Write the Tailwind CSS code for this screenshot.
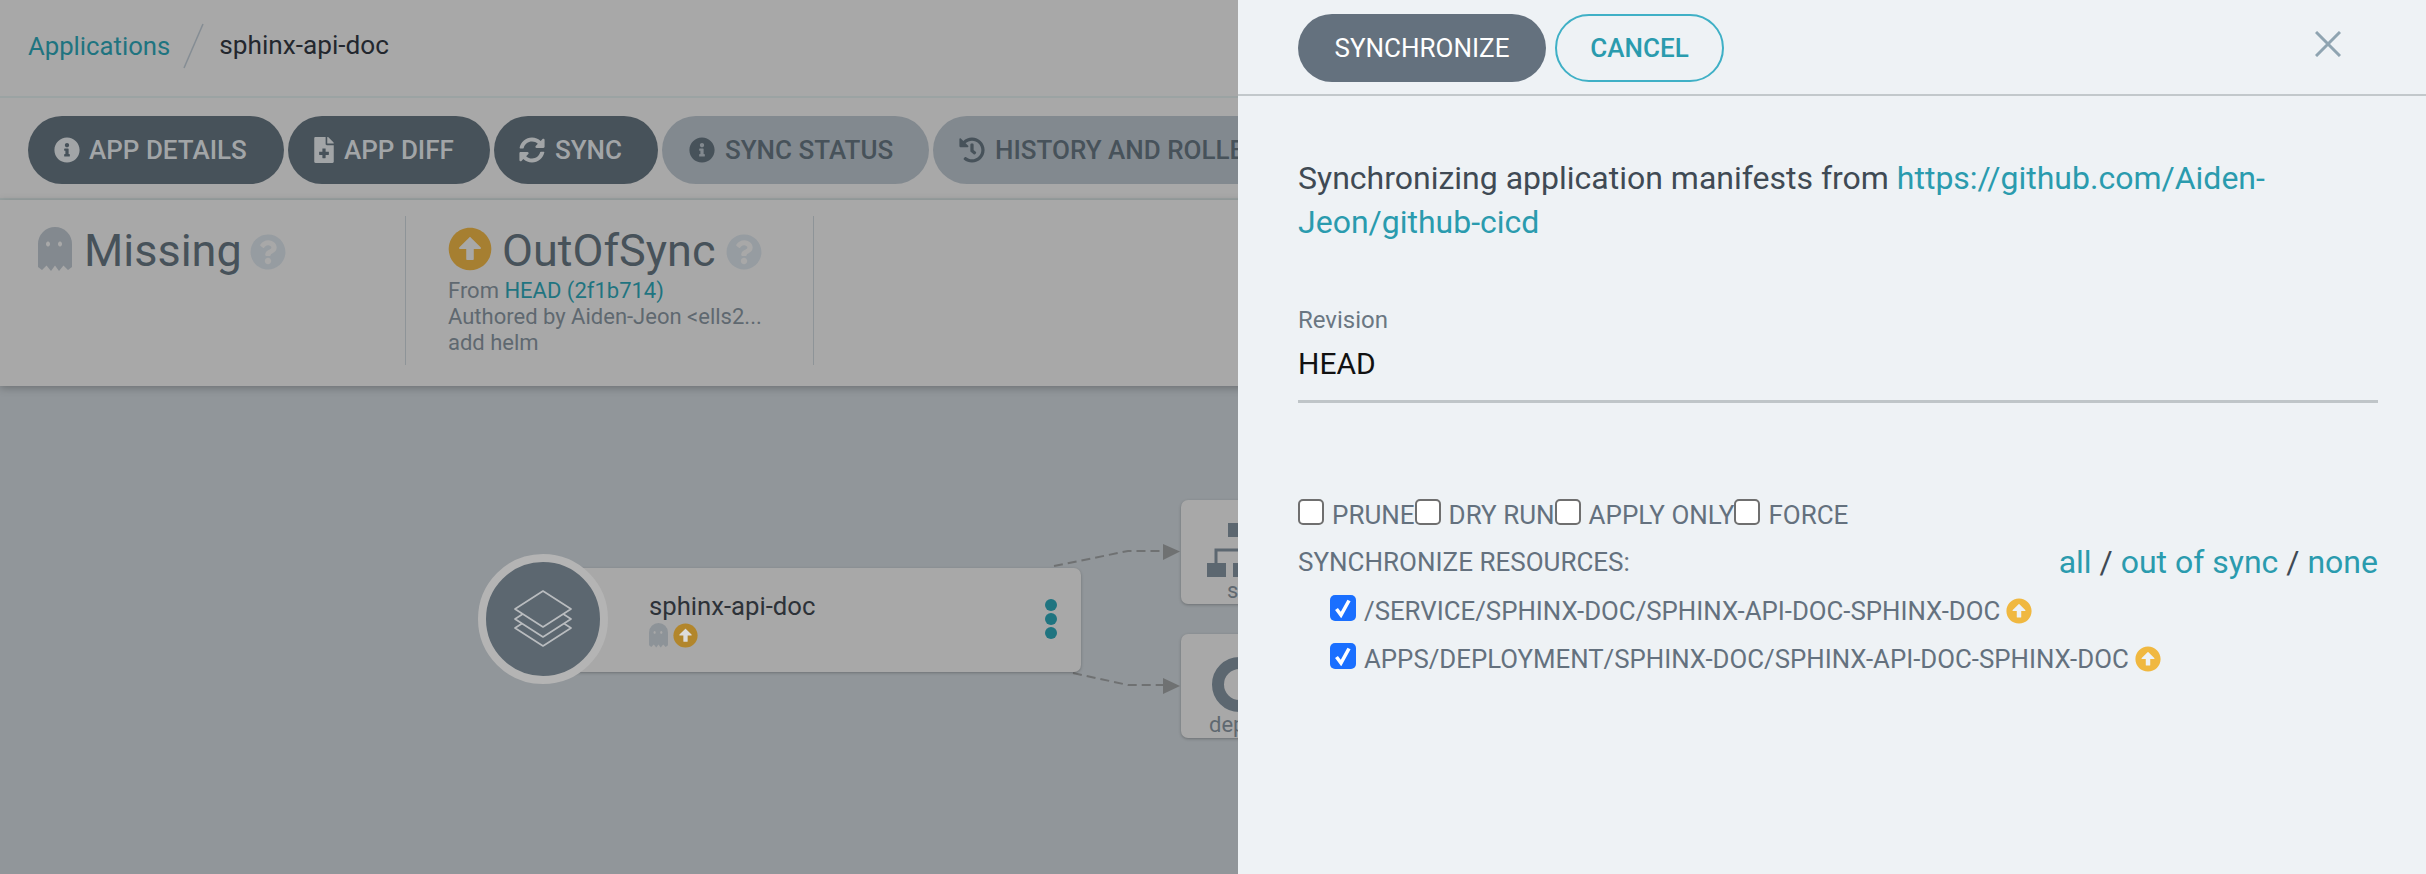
<!DOCTYPE html>
<html lang="en">
<head>
<meta charset="UTF-8">
<title>sphinx-api-doc</title>
<script src="https://cdn.jsdelivr.net/npm/@tailwindcss/browser@4"></script>
</head>
<body class="bg-[#a8a8a8] font-['Roboto',sans-serif]">
<div class="relative w-[2426px] h-[874px] overflow-hidden flex flex-col bg-[#91969a]">

  <!-- top bar -->
  <div class="h-[98px] shrink-0 flex items-center pl-[28px] pb-[4px] bg-[#a8a8a8] border-b-2 border-[#9ba3a3] text-[26px]">
    <a class="text-[#1f7480] text-[25.7px]">Applications</a>
    <svg class="w-[24px] h-[48px] ml-[12px] mr-[13px]" viewBox="0 0 24 48"><path d="M21 2 L2 46" stroke="#858d94" stroke-width="1.5" fill="none"/></svg>
    <span class="text-[#23272e] text-[26.2px]">sphinx-api-doc</span>
  </div>

  <!-- toolbar -->
  <div class="h-[102px] shrink-0 flex items-start pt-[18px] gap-[4px] pl-[28px] bg-[#a8a8a8] border-b-2 border-[#9ba3a3] text-[26px] font-medium whitespace-nowrap">
    <div class="h-[68px] w-[256px] rounded-[34px] bg-[#47525a] text-[#a2a5a7] flex items-center pl-[26px] gap-[9px] shrink-0">
      <svg class="w-[26px] h-[26px] fill-current" viewBox="0 0 512 512"><path d="M256 8C119.043 8 8 119.083 8 256c0 136.997 111.043 248 248 248s248-111.003 248-248C504 119.083 392.957 8 256 8zm0 110c23.196 0 42 18.804 42 42s-18.804 42-42 42-42-18.804-42-42 18.804-42 42-42zm56 254c0 6.627-5.373 12-12 12h-88c-6.627 0-12-5.373-12-12v-24c0-6.627 5.373-12 12-12h12v-64h-12c-6.627 0-12-5.373-12-12v-24c0-6.627 5.373-12 12-12h64c6.627 0 12 5.373 12 12v100h12c6.627 0 12 5.373 12 12v24z"/></svg>
      APP DETAILS
    </div>
    <div class="h-[68px] w-[202px] rounded-[34px] bg-[#47525a] text-[#a2a5a7] flex items-center pl-[26px] gap-[10px] shrink-0">
      <svg class="w-[20px] h-[26px] fill-current" viewBox="0 0 384 512"><path d="M377 105L279.1 7c-4.5-4.5-10.6-7-17-7H256v128h128v-6.1c0-6.3-2.5-12.4-7-16.9zm-153 31V0H24C10.7 0 0 10.7 0 24v464c0 13.3 10.7 24 24 24h336c13.3 0 24-10.7 24-24V160H248c-13.2 0-24-10.8-24-24zm64 160v48c0 4.4-3.6 8-8 8h-56v56c0 4.4-3.6 8-8 8h-48c-4.4 0-8-3.6-8-8v-56h-56c-4.4 0-8-3.6-8-8v-48c0-4.4 3.6-8 8-8h56v-56c0-4.4 3.6-8 8-8h48c4.4 0 8 3.6 8 8v56h56c4.4 0 8 3.6 8 8z"/></svg>
      APP DIFF
    </div>
    <div class="h-[68px] w-[164px] rounded-[34px] bg-[#47525a] text-[#a2a5a7] flex items-center pl-[25px] gap-[10px] shrink-0">
      <svg class="w-[26px] h-[26px] fill-current" viewBox="0 0 512 512"><path d="M370.72 133.28C339.458 104.008 298.888 87.962 255.848 88c-77.458.068-144.328 53.178-162.791 126.85-1.344 5.363-6.122 9.15-11.651 9.15H24.103c-7.498 0-13.194-6.807-11.807-14.176C33.933 94.924 134.813 8 256 8c66.448 0 126.791 26.136 171.315 68.685L463.03 40.97C478.149 25.851 504 36.559 504 57.941V192c0 13.255-10.745 24-24 24H345.941c-21.382 0-32.09-25.851-16.971-40.971l41.75-41.749zM32 296h134.059c21.382 0 32.09 25.851 16.971 40.971l-41.75 41.75c31.262 29.273 71.835 45.319 114.876 45.28 77.418-.07 144.315-53.144 162.787-126.849 1.344-5.363 6.122-9.15 11.651-9.15h57.304c7.498 0 13.194 6.807 11.807 14.176C478.067 417.076 377.187 504 256 504c-66.448 0-126.791-26.136-171.315-68.685L48.97 471.03C33.851 486.149 8 475.441 8 454.059V320c0-13.255 10.745-24 24-24z"/></svg>
      SYNC
    </div>
    <div class="h-[68px] w-[267px] rounded-[34px] bg-[#82898f] text-[#47525a] flex items-center pl-[27px] gap-[10px] shrink-0">
      <svg class="w-[26px] h-[26px] fill-current" viewBox="0 0 512 512"><path d="M256 8C119.043 8 8 119.083 8 256c0 136.997 111.043 248 248 248s248-111.003 248-248C504 119.083 392.957 8 256 8zm0 110c23.196 0 42 18.804 42 42s-18.804 42-42 42-42-18.804-42-42 18.804-42 42-42zm56 254c0 6.627-5.373 12-12 12h-88c-6.627 0-12-5.373-12-12v-24c0-6.627 5.373-12 12-12h12v-64h-12c-6.627 0-12-5.373-12-12v-24c0-6.627 5.373-12 12-12h64c6.627 0 12 5.373 12 12v100h12c6.627 0 12 5.373 12 12v24z"/></svg>
      SYNC STATUS
    </div>
    <div class="h-[68px] w-[480px] rounded-[34px] bg-[#82898f] text-[#47525a] flex items-center pl-[26px] gap-[10px] shrink-0">
      <svg class="w-[26px] h-[26px] fill-current shrink-0" viewBox="0 0 512 512"><path d="M504 255.531c.253 136.64-111.18 248.372-247.82 248.468-59.015.042-113.223-20.53-155.822-54.911-11.077-8.94-11.905-25.541-1.839-35.607l11.267-11.267c8.609-8.609 22.353-9.551 31.891-1.984C173.062 425.135 212.781 440 256 440c101.705 0 184-82.311 184-184 0-101.705-82.311-184-184-184-48.814 0-93.149 18.969-126.068 49.932l50.754 50.754c10.08 10.08 2.941 27.314-11.313 27.314H24c-8.837 0-16-7.163-16-16V38.627c0-14.254 17.234-21.393 27.314-11.314l49.372 49.372C129.209 34.136 189.552 8 256 8c136.81 0 247.747 110.78 248 247.531zm-180.912 78.784l9.823-12.63c8.138-10.463 6.253-25.542-4.21-33.679L288 256.349V152c0-13.255-10.745-24-24-24h-16c-13.255 0-24 10.745-24 24v135.651l65.409 50.874c10.463 8.137 25.541 6.253 33.679-4.21z"/></svg>
      HISTORY AND ROLLBACK
    </div>
  </div>

  <!-- status panel -->
  <div class="h-[186px] shrink-0 flex bg-[#a8a8a8] shadow-[0_2px_8px_rgba(0,0,0,0.25)] z-10 pt-[16px]">
    <div class="w-[406px] h-[149px] border-r border-[#8e9498] pl-[38px] pt-[13px] flex items-start shrink-0">
      <svg class="w-[34px] h-[45px] fill-[#83898f] mt-[-2px] mr-[12px]" viewBox="0 0 34 45" fill-rule="evenodd"><path d="M0 17 A17 17 0 0 1 34 17 V40 L30 43 L25.5 38.5 L21 44 L17 38.5 L13 44 L8.5 38.5 L4 43 L0 40 Z M10 14.5 a2 2.5 0 1 0 .01 0 Z M22 14.5 a2 2.5 0 1 0 .01 0 Z"/></svg>
      <span class="text-[45px] leading-[44px] text-[#47525a] mr-[8px]">Missing</span>
      <svg class="w-[36px] h-[36px] fill-[#969ca1] mt-[5px]" viewBox="0 0 512 512"><path d="M504 256c0 136.997-111.043 248-248 248S8 392.997 8 256C8 119.083 119.043 8 256 8s248 111.083 248 248zM262.655 90c-54.497 0-89.255 22.957-116.549 63.758-3.536 5.286-2.353 12.415 2.715 16.258l34.699 26.31c5.205 3.947 12.621 3.008 16.665-2.122 17.864-22.658 30.113-35.797 57.303-35.797 20.429 0 45.698 13.148 45.698 32.958 0 14.976-12.363 22.667-32.534 33.976C247.128 238.528 216 254.941 216 296v4c0 6.627 5.373 12 12 12h56c6.627 0 12-5.373 12-12v-1.333c0-28.462 83.186-29.647 83.186-106.667 0-58.002-60.165-102-116.531-102zM256 338c-25.365 0-46 20.635-46 46 0 25.364 20.635 46 46 46s46-20.636 46-46c0-25.365-20.635-46-46-46z"/></svg>
    </div>
    <div class="w-[408px] h-[149px] border-r border-[#8e9498] pl-[42px] pt-[11px] shrink-0">
      <div class="flex items-start gap-[10px] h-[51px]">
        <svg class="w-[44px] h-[44px] fill-[#a67f31]" viewBox="0 0 512 512"><path d="M8 256C8 119 119 8 256 8s248 111 248 248-111 248-248 248S8 393 8 256z"/><path fill="#a8a8a8" d="M300 372V256h70.9c10.7 0 16.1-13 8.5-20.5L264.5 121.2c-4.7-4.7-12.2-4.7-16.9 0l-115 114.3c-7.6 7.6-2.2 20.5 8.5 20.5H212v116c0 6.6 5.4 12 12 12h64c6.6 0 12-5.4 12-12z"/></svg>
        <span class="text-[45px] leading-[44px] mt-[2px] text-[#47525a]">OutOfSync</span>
        <svg class="w-[36px] h-[36px] fill-[#969ca1] mt-[7px]" viewBox="0 0 512 512"><path d="M504 256c0 136.997-111.043 248-248 248S8 392.997 8 256C8 119.083 119.043 8 256 8s248 111.083 248 248zM262.655 90c-54.497 0-89.255 22.957-116.549 63.758-3.536 5.286-2.353 12.415 2.715 16.258l34.699 26.31c5.205 3.947 12.621 3.008 16.665-2.122 17.864-22.658 30.113-35.797 57.303-35.797 20.429 0 45.698 13.148 45.698 32.958 0 14.976-12.363 22.667-32.534 33.976C247.128 238.528 216 254.941 216 296v4c0 6.627 5.373 12 12 12h56c6.627 0 12-5.373 12-12v-1.333c0-28.462 83.186-29.647 83.186-106.667 0-58.002-60.165-102-116.531-102zM256 338c-25.365 0-46 20.635-46 46 0 25.364 20.635 46 46 46s46-20.636 46-46c0-25.365-20.635-46-46-46z"/></svg>
      </div>
      <div class="text-[22px] leading-[26px] text-[#5f6870]">
        <div>From <a class="text-[#1f7480]">HEAD (2f1b714)</a></div>
        <div>Authored by Aiden-Jeon &lt;ells2...</div>
        <div>add helm</div>
      </div>
    </div>
  </div>

  <!-- resource graph -->
  <div class="relative flex-1">
    <svg class="absolute left-[1048px] top-[150px] w-[140px] h-[170px]" viewBox="0 0 140 170">
      <path d="M6 30 L80 15 L115 15" stroke="#6f7172" stroke-width="2" stroke-dasharray="9 5" fill="none"/>
      <path d="M115 8 L132 15.5 L115 24 Z" fill="#6f7172"/>
      <path d="M25 137 L80 149 L115 149" stroke="#6f7172" stroke-width="2" stroke-dasharray="9 5" fill="none"/>
      <path d="M115 142 L132 150 L115 158 Z" fill="#6f7172"/>
    </svg>

    <!-- application node -->
    <div class="absolute left-[540px] top-[182px] w-[541px] h-[104px] rounded-[7px] bg-[#a8a8a8] shadow-[0_1px_3px_rgba(0,0,0,0.25)] pl-[109px] pt-[24px]">
      <div class="text-[25.7px] leading-[28px] text-[#2d3238]">sphinx-api-doc</div>
      <div class="flex items-center gap-[5px] mt-[3px]">
        <svg class="w-[19px] h-[25px] fill-[#8d9398]" viewBox="0 0 34 45" fill-rule="evenodd"><path d="M0 17 A17 17 0 0 1 34 17 V40 L30 43 L25.5 38.5 L21 44 L17 38.5 L13 44 L8.5 38.5 L4 43 L0 40 Z M10 14.5 a2 2.5 0 1 0 .01 0 Z M22 14.5 a2 2.5 0 1 0 .01 0 Z"/></svg>
        <svg class="w-[25px] h-[25px] fill-[#b2862c]" viewBox="0 0 512 512"><path d="M8 256C8 119 119 8 256 8s248 111 248 248-111 248-248 248S8 393 8 256z"/><path fill="#dcdcdc" d="M300 372V256h70.9c10.7 0 16.1-13 8.5-20.5L264.5 121.2c-4.7-4.7-12.2-4.7-16.9 0l-115 114.3c-7.6 7.6-2.2 20.5 8.5 20.5H212v116c0 6.6 5.4 12 12 12h64c6.6 0 12-5.4 12-12z"/></svg>
      </div>
      <div class="absolute right-[24px] top-[31px] flex flex-col gap-[2px]">
        <span class="w-[12px] h-[12px] rounded-full bg-[#1f7480]"></span>
        <span class="w-[12px] h-[12px] rounded-full bg-[#1f7480]"></span>
        <span class="w-[12px] h-[12px] rounded-full bg-[#1f7480]"></span>
      </div>
    </div>
    <div class="absolute left-[478px] top-[168px] w-[130px] h-[130px] rounded-full bg-[#5c6770] border-[8px] border-[#b4b4b4] flex items-center justify-center">
      <svg class="w-[60px] h-[60px]" viewBox="0 0 60 60" fill="none" stroke="#b9bcbf" stroke-width="1.7" stroke-linejoin="round">
        <path d="M2 39 L30 21 L58 39 L30 57 Z"/>
        <path d="M2 30 L30 12 L58 30 L30 48 Z" fill="#5c6770"/>
        <path d="M2 20 L30 2 L58 20 L30 38 Z" fill="#5c6770"/>
      </svg>
    </div>

    <!-- child nodes, cut off by the panel -->
    <div class="absolute left-[1181px] top-[114px] w-[130px] h-[104px] rounded-[7px] bg-[#a8a8a8] shadow-[0_1px_3px_rgba(0,0,0,0.25)]">
      <svg class="absolute left-[26px] top-[23px] w-[90px] h-[54px]" viewBox="0 0 90 54" fill="#5c6770">
        <rect x="21" y="0" width="22" height="14"/>
        <rect x="0" y="40" width="19" height="14"/>
        <rect x="26" y="40" width="19" height="14"/>
        <path d="M9 40 V27 H60" fill="none" stroke="#5c6770" stroke-width="3"/>
      </svg>
      <div class="absolute left-[46px] top-[78px] text-[22px] leading-[26px] text-[#5f6870]">svc</div>
    </div>
    <div class="absolute left-[1181px] top-[248px] w-[130px] h-[104px] rounded-[7px] bg-[#a8a8a8] shadow-[0_1px_3px_rgba(0,0,0,0.25)]">
      <div class="absolute left-[31px] top-[23px] w-[55px] h-[55px] rounded-full border-[12px] border-[#5c6770]"></div>
      <div class="absolute left-[28px] top-[78px] text-[22px] leading-[26px] text-[#5f6870]">deploy</div>
    </div>
  </div>

  <!-- sync panel -->
  <div class="absolute left-[1238px] top-0 bottom-0 right-0 bg-[#eef2f5] z-20 flex flex-col">
    <div class="h-[96px] shrink-0 border-b-2 border-[#c2c8cb] pl-[60px] pr-[85px] flex items-start justify-between">
      <div class="flex gap-[9px] mt-[14px]">
        <button class="h-[68px] w-[248px] rounded-[34px] bg-[#64717e] text-white text-[26px]">SYNCHRONIZE</button>
        <button class="h-[68px] w-[169px] rounded-[34px] border-2 border-[#3fb0c6] text-[#2a9bae] text-[26px] font-medium">CANCEL</button>
      </div>
      <svg class="w-[26px] h-[26px] mt-[31px]" viewBox="0 0 26 26" stroke="#8fa4b1" stroke-width="3" fill="none"><path d="M1 1 L25 25 M25 1 L1 25"/></svg>
    </div>
    <div class="pl-[60px] pr-[48px] flex-1">
      <p class="mt-[60px] text-[32px] leading-[44px] text-[#3f4a54]">Synchronizing application manifests from <a class="text-[#2a9bae]">https://github.com/Aiden-Jeon/github-cicd</a></p>
      <div class="mt-[63px] text-[24px] leading-[26px] text-[#6a7782]">Revision</div>
      <div class="mt-[12px] h-[58px] border-b-[3px] border-[#bfc5c8] text-[30px] leading-[38px] text-[#111]">HEAD</div>
      <div class="mt-[97px] flex items-center text-[26px] leading-[30px] text-[#64717e] h-[30px]">
        <input type="checkbox" class="appearance-none w-[26px] h-[26px] mb-[7px] bg-white border-2 border-[#6f6f6f] rounded-[5px] shrink-0">
        <span class="ml-[8px]">PRUNE</span>
        <input type="checkbox" class="appearance-none w-[26px] h-[26px] mb-[7px] bg-white border-2 border-[#6f6f6f] rounded-[5px] shrink-0">
        <span class="ml-[8px]">DRY RUN</span>
        <input type="checkbox" class="appearance-none w-[26px] h-[26px] mb-[7px] bg-white border-2 border-[#6f6f6f] rounded-[5px] shrink-0">
        <span class="ml-[8px]">APPLY ONLY</span>
        <input type="checkbox" class="appearance-none w-[26px] h-[26px] mb-[7px] bg-white border-2 border-[#6f6f6f] rounded-[5px] shrink-0">
        <span class="ml-[8px]">FORCE</span>
      </div>
      <div class="mt-[14px] flex items-center justify-between h-[36px]">
        <span class="text-[26px] text-[#64717e]">SYNCHRONIZE RESOURCES:</span>
        <span class="text-[32px] text-[#3f4a54]"><a class="text-[#2a9bae]">all</a> / <a class="text-[#2a9bae]">out of sync</a> / <a class="text-[#2a9bae]">none</a></span>
      </div>
      <div class="pl-[32px] mt-[7px] text-[25.8px] text-[#64717e]">
        <div class="h-[48px] flex items-center">
          <span class="relative w-[26px] h-[26px] mb-[7px] shrink-0">
            <input type="checkbox" checked class="appearance-none block w-[26px] h-[26px] bg-[#1a6fff] rounded-[5px]">
            <svg class="absolute left-[4px] top-[3px] w-[18px] h-[20px]" viewBox="0 0 18 20" fill="none" stroke="#fff" stroke-width="3.6"><path d="M2.5 11 L7 17 L15 2.5"/></svg>
          </span>
          <span class="ml-[8px]">/SERVICE/SPHINX-DOC/SPHINX-API-DOC-SPHINX-DOC</span>
          <svg class="w-[26px] h-[26px] ml-[6px] fill-[#f0b840]" viewBox="0 0 512 512"><path d="M8 256C8 119 119 8 256 8s248 111 248 248-111 248-248 248S8 393 8 256zm292 116V256h70.9c10.7 0 16.1-13 8.5-20.5L264.5 121.2c-4.7-4.7-12.2-4.7-16.9 0l-115 114.3c-7.6 7.6-2.2 20.5 8.5 20.5H212v116c0 6.6 5.4 12 12 12h64c6.6 0 12-5.4 12-12z"/></svg>
        </div>
        <div class="h-[48px] flex items-center">
          <span class="relative w-[26px] h-[26px] mb-[7px] shrink-0">
            <input type="checkbox" checked class="appearance-none block w-[26px] h-[26px] bg-[#1a6fff] rounded-[5px]">
            <svg class="absolute left-[4px] top-[3px] w-[18px] h-[20px]" viewBox="0 0 18 20" fill="none" stroke="#fff" stroke-width="3.6"><path d="M2.5 11 L7 17 L15 2.5"/></svg>
          </span>
          <span class="ml-[8px]">APPS/DEPLOYMENT/SPHINX-DOC/SPHINX-API-DOC-SPHINX-DOC</span>
          <svg class="w-[26px] h-[26px] ml-[6px] fill-[#f0b840]" viewBox="0 0 512 512"><path d="M8 256C8 119 119 8 256 8s248 111 248 248-111 248-248 248S8 393 8 256zm292 116V256h70.9c10.7 0 16.1-13 8.5-20.5L264.5 121.2c-4.7-4.7-12.2-4.7-16.9 0l-115 114.3c-7.6 7.6-2.2 20.5 8.5 20.5H212v116c0 6.6 5.4 12 12 12h64c6.6 0 12-5.4 12-12z"/></svg>
        </div>
      </div>
    </div>
  </div>
</div>
</body>
</html>
